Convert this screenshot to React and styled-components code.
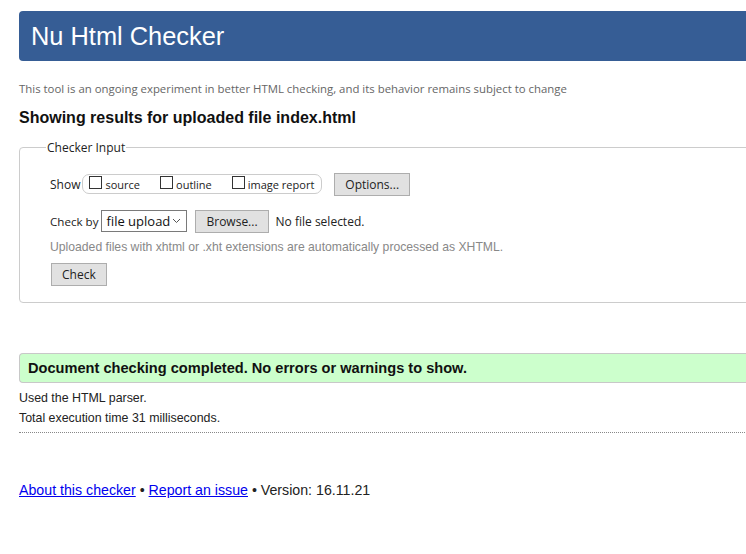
import React from 'react';
import styled, { createGlobalStyle } from 'styled-components';

const GlobalStyle = createGlobalStyle`
  html, body {
    margin: 0;
    padding: 0;
    background: #fff;
    overflow: hidden;
  }
  body {
    font-family: 'Liberation Sans', Arial, sans-serif;
    color: #222;
  }
`;

const Page = styled.div`
  width: 800px;
  padding: 11px 0 0 19px;
`;

const Header = styled.h1`
  margin: 0;
  height: 50px;
  display: flex;
  align-items: center;
  padding-left: 12px;
  background: #365d95;
  color: #fff;
  border-radius: 4px 0 0 4px;
  font-size: 25.4px;
  font-weight: normal;
`;

const Intro = styled.p`
  margin: 20px 0 0;
  font-family: 'Open Sans', sans-serif;
  font-size: 11.4px;
  color: #666;
`;

const Heading = styled.h2`
  margin: 13px 0 0;
  font-size: 16px;
  font-weight: bold;
  color: #111;
`;

const Fieldset = styled.fieldset`
  margin: 12px 0 0;
  padding: 12px 0 0 30px;
  border: 1px solid #ccc;
  border-radius: 4px;
  height: 164px;
  box-sizing: border-box;
  font-family: 'Open Sans', sans-serif;
  font-size: 12px;
`;

const Legend = styled.legend`
  margin-left: -4px;
  padding: 0 1px;
  font-size: 12px;
  color: #222;
`;

const Row = styled.div`
  display: flex;
  align-items: center;
  height: 24px;
  margin-top: ${p => p.$top || 0}px;
  font-size: 12px;
  color: #222;
`;

const Label = styled.span`
  margin-right: ${p => p.$gap || 2}px;
  margin-left: ${p => p.$left || 0}px;
  font-size: ${p => p.$size || 12}px;
`;

const CheckGroup = styled.div`
  display: flex;
  align-items: center;
  height: 18px;
  padding: 0 7px 0 6px;
  border: 1px solid #ccc;
  border-radius: 7px;
  font-size: 11px;
`;

const CheckItem = styled.label`
  display: flex;
  align-items: center;
  margin-right: ${p => p.$last ? 0 : 20}px;
`;

const Box = styled.span`
  width: 11px;
  height: 11px;
  border: 1px solid #333;
  margin-right: 3px;
  margin-top: -3px;
`;

const Button = styled.button`
  height: 23px;
  padding: 0 ${p => p.$pad || 10}px;
  margin-left: ${p => p.$left || 0}px;
  background: #e1e1e1;
  border: 1px solid #adadad;
  font-family: 'Open Sans', sans-serif;
  font-size: 12px;
  color: #222;
`;

const Select = styled.div`
  display: flex;
  align-items: center;
  justify-content: space-between;
  width: 86px;
  height: 22px;
  box-sizing: border-box;
  padding: 0 5px 0 4px;
  border: 1px solid #7a7a7a;
  font-size: 13px;
  color: #111;
`;

const Hint = styled.p`
  margin: 7px 0 0;
  font-family: 'Liberation Sans', Arial, sans-serif;
  font-size: 12.2px;
  color: #888;
`;

const Success = styled.div`
  margin-top: 50px;
  height: 30px;
  display: flex;
  align-items: center;
  padding-left: 8px;
  background: #ccffcc;
  border: 1px solid #c8c8c8;
  border-right: none;
  border-radius: 4px 0 0 4px;
  box-sizing: border-box;
  font-size: 14.6px;
  font-weight: bold;
  color: #111;
`;

const Detail = styled.p`
  margin: ${p => p.$top || 0}px 0 0;
  font-size: 12.4px;
  line-height: 20px;
  color: #222;
`;

const Rule = styled.hr`
  margin: 4px 0 0;
  border: none;
  border-top: 1px dotted #888;
`;

const Footer = styled.p`
  margin: 49px 0 0;
  font-size: 14.2px;
  color: #222;
  a {
    color: #0000ee;
    text-decoration: underline;
  }
`;

const Chevron = () => (
  <svg width="9" height="6" viewBox="0 0 9 6">
    <path d="M1 1l3.5 3.5L8 1" fill="none" stroke="#555" strokeWidth="1" />
  </svg>
);

export default function App() {
  return (
    <>
      <GlobalStyle />
      <Page>
        <Header>Nu Html Checker</Header>
        <Intro>This tool is an ongoing experiment in better HTML checking, and its behavior remains subject to change</Intro>
        <Heading>Showing results for uploaded file index.html</Heading>
        <Fieldset>
          <Legend>Checker Input</Legend>
          <Row $top={4}>
            <Label>Show</Label>
            <CheckGroup>
              <CheckItem><Box />source</CheckItem>
              <CheckItem><Box />outline</CheckItem>
              <CheckItem $last><Box />image report</CheckItem>
            </CheckGroup>
            <Button $left={12} $pad={10}>Options...</Button>
          </Row>
          <Row $top={13}>
            <Label $gap={3} $size={11.6}>Check by</Label>
            <Select>file upload <Chevron /></Select>
            <Button $left={8} $pad={10}>Browse...</Button>
            <Label $left={7}>No file selected.</Label>
          </Row>
          <Hint>Uploaded files with xhtml or .xht extensions are automatically processed as XHTML.</Hint>
          <Row $top={8}>
            <Button $left={1} $pad={10}>Check</Button>
          </Row>
        </Fieldset>
        <Success>Document checking completed. No errors or warnings to show.</Success>
        <Detail $top={5}>Used the HTML parser.</Detail>
        <Detail>Total execution time 31 milliseconds.</Detail>
        <Rule />
        <Footer>
          <a href="#">About this checker</a> • <a href="#">Report an issue</a> • Version: 16.11.21
        </Footer>
      </Page>
    </>
  );
}
